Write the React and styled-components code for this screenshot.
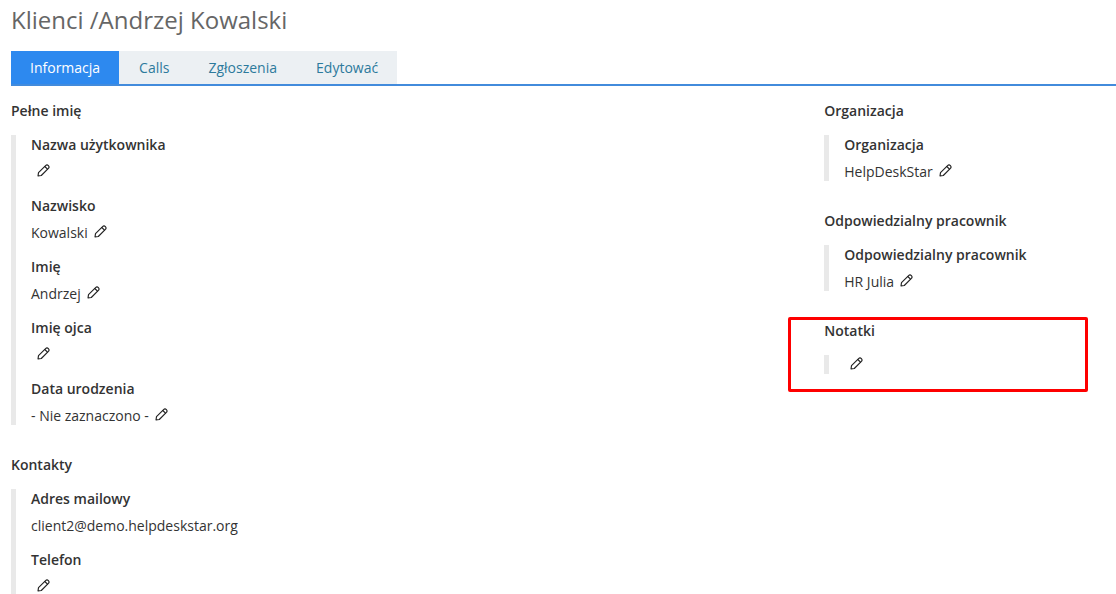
import React, { useState } from 'react';
import styled, { createGlobalStyle } from 'styled-components';

const GlobalStyle = createGlobalStyle`
  * {
    box-sizing: border-box;
  }
  body {
    margin: 0;
    background: #fff;
    color: #333;
    font: 14px/20px 'Open Sans', sans-serif;
    overflow: hidden;
  }
`;

const Page = styled.main`
  padding: 4px 0 0 11px;
`;

const PageTitle = styled.h1`
  margin: 0 0 15px;
  font-size: 24px;
  line-height: 32px;
  font-weight: 400;
  color: #666;
`;

const Tabs = styled.nav`
  display: flex;
  border-bottom: 2px solid #428bdc;
`;

const Tab = styled.button`
  height: 33px;
  padding: ${props => (props.$active ? '0 19px' : '0 19px 0 20px')};
  border: 0;
  font: inherit;
  cursor: pointer;
  background: ${props => (props.$active ? '#2d89ef' : '#ecf0f3')};
  color: ${props => (props.$active ? '#fff' : '#2c7a9c')};
`;

const Columns = styled.div`
  display: grid;
  grid-template-columns: 73.6% 1fr;
  align-items: start;
  padding-top: 15px;
`;

const Column = styled.div`
  display: flex;
  flex-direction: column;
  gap: 30px;
`;

const SectionBox = styled.section`
  position: relative;
`;

const SectionTitle = styled.h2`
  margin: 0 0 14px;
  font-size: 14px;
  line-height: 20px;
  font-weight: 600;
`;

const Fields = styled.dl`
  display: flex;
  flex-direction: column;
  gap: 15px;
  margin: 0;
  padding-left: 15px;
  border-left: 5px solid #e9e9e9;
`;

const FieldLabel = styled.dt`
  margin-bottom: 7px;
  font-weight: 600;
`;

const FieldValue = styled.dd`
  display: flex;
  align-items: flex-start;
  height: 19px;
  margin: 0;
`;

const EditButton = styled.button`
  display: flex;
  margin: 0 0 0 6px;
  padding: 2px 0 0;
  border: 0;
  background: none;
  color: #222;
  cursor: pointer;
`;

// red frame drawn over the section, wider than the section on the left
const Highlight = styled.div`
  position: absolute;
  top: -4px;
  bottom: -18px;
  left: -36px;
  right: 28px;
  border: 3px solid #fe0000;
  border-radius: 2px;
  pointer-events: none;
`;

const PencilIcon = () => (
  <svg width="13" height="13" viewBox="0 0 13 13" fill="none" stroke="currentColor" strokeWidth="1.15" strokeLinejoin="round" strokeLinecap="round" aria-hidden="true">
    <path d="M1 12 L1.5 8.7 L8.6 1.6 Q10 .3 11.4 1.6 Q12.7 3 11.4 4.4 L4.3 11.5 Z" />
    <path d="M7.8 2.5 L10.5 5.2" />
  </svg>
);

const tabs = ['Informacja', 'Calls', 'Zgłoszenia', 'Edytować'];

const mainSections = [
  {
    title: 'Pełne imię',
    fields: [
      { label: 'Nazwa użytkownika', editable: true },
      { label: 'Nazwisko', value: 'Kowalski', editable: true },
      { label: 'Imię', value: 'Andrzej', editable: true },
      { label: 'Imię ojca', editable: true },
      { label: 'Data urodzenia', value: '- Nie zaznaczono -', editable: true },
    ],
  },
  {
    title: 'Kontakty',
    fields: [
      { label: 'Adres mailowy', value: 'client2@demo.helpdeskstar.org' },
      { label: 'Telefon', editable: true },
    ],
  },
];

const sideSections = [
  { title: 'Organizacja', fields: [{ label: 'Organizacja', value: 'HelpDeskStar', editable: true }] },
  { title: 'Odpowiedzialny pracownik', fields: [{ label: 'Odpowiedzialny pracownik', value: 'HR Julia', editable: true }] },
  { title: 'Notatki', fields: [{ editable: true }], highlighted: true },
];

const Section = ({ title, fields, highlighted }) => (
  <SectionBox>
    <SectionTitle>{title}</SectionTitle>
    <Fields>
      {fields.map(field => (
        <div key={field.label || title}>
          {field.label && <FieldLabel>{field.label}</FieldLabel>}
          <FieldValue>
            {field.value}
            {field.editable && (
              <EditButton type="button" aria-label={field.label || title}>
                <PencilIcon />
              </EditButton>
            )}
          </FieldValue>
        </div>
      ))}
    </Fields>
    {highlighted && <Highlight />}
  </SectionBox>
);

const App = () => {
  const [activeTab, setActiveTab] = useState(tabs[0]);

  return (
    <Page>
      <GlobalStyle />
      <PageTitle>Klienci /Andrzej Kowalski</PageTitle>
      <Tabs>
        {tabs.map(tab => (
          <Tab key={tab} type="button" $active={tab === activeTab} onClick={() => setActiveTab(tab)}>
            {tab}
          </Tab>
        ))}
      </Tabs>
      <Columns>
        <Column>
          {mainSections.map(section => <Section key={section.title} {...section} />)}
        </Column>
        <Column>
          {sideSections.map(section => <Section key={section.title} {...section} />)}
        </Column>
      </Columns>
    </Page>
  );
};

export default App;
